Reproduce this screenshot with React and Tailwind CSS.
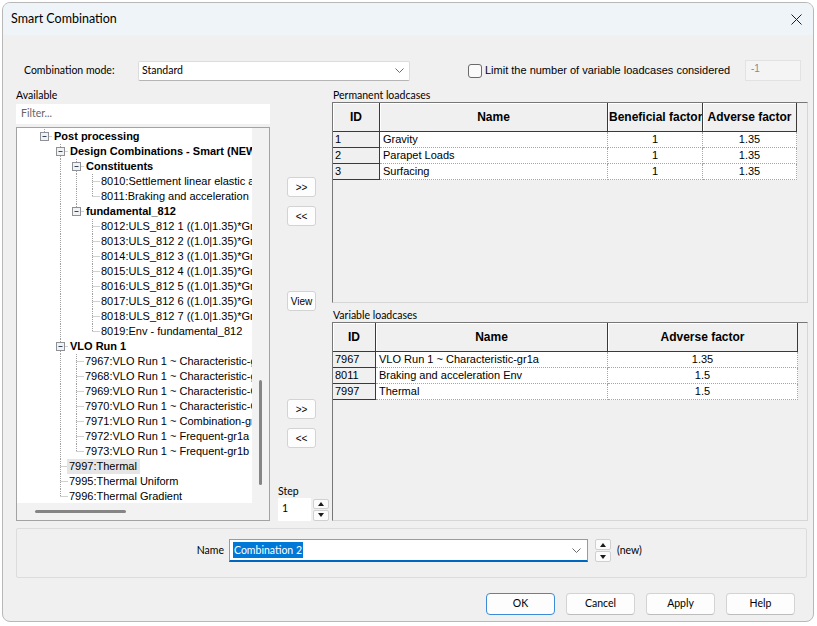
import React from 'react'

const ui = "font-['Lato','Noto_Sans',sans-serif]"
const tah = "font-['Liberation_Sans',Arial,sans-serif]"

const tree = [
  { l: 0, t: 'Post processing', b: true, exp: true, last: true, c: [] },
  { l: 1, t: 'Design Combinations - Smart (NEW)', b: true, exp: true, c: [] },
  { l: 2, t: 'Constituents', b: true, exp: true, c: [1] },
  { l: 3, t: '8010:Settlement linear elastic analysis', c: [1, 2] },
  { l: 3, t: '8011:Braking and acceleration Env', last: true, c: [1, 2] },
  { l: 2, t: 'fundamental_812', b: true, exp: true, last: true, c: [1] },
  { l: 3, t: '8012:ULS_812 1 ((1.0|1.35)*Gravity', c: [1] },
  { l: 3, t: '8013:ULS_812 2 ((1.0|1.35)*Gravity', c: [1] },
  { l: 3, t: '8014:ULS_812 3 ((1.0|1.35)*Gravity', c: [1] },
  { l: 3, t: '8015:ULS_812 4 ((1.0|1.35)*Gravity', c: [1] },
  { l: 3, t: '8016:ULS_812 5 ((1.0|1.35)*Gravity', c: [1] },
  { l: 3, t: '8017:ULS_812 6 ((1.0|1.35)*Gravity', c: [1] },
  { l: 3, t: '8018:ULS_812 7 ((1.0|1.35)*Gravity', c: [1] },
  { l: 3, t: '8019:Env - fundamental_812', last: true, c: [1] },
  { l: 1, t: 'VLO Run 1', b: true, exp: true, c: [] },
  { l: 2, t: '7967:VLO Run 1 ~ Characteristic-gr1a', c: [1] },
  { l: 2, t: '7968:VLO Run 1 ~ Characteristic-gr1b', c: [1] },
  { l: 2, t: '7969:VLO Run 1 ~ Characteristic-Gr2', c: [1] },
  { l: 2, t: '7970:VLO Run 1 ~ Characteristic-Gr3', c: [1] },
  { l: 2, t: '7971:VLO Run 1 ~ Combination-gr1a', c: [1] },
  { l: 2, t: '7972:VLO Run 1 ~ Frequent-gr1a', c: [1] },
  { l: 2, t: '7973:VLO Run 1 ~ Frequent-gr1b', last: true, c: [1] },
  { l: 1, t: '7997:Thermal', hl: true, c: [] },
  { l: 1, t: '7995:Thermal Uniform', c: [] },
  { l: 1, t: '7996:Thermal Gradient', last: true, c: [] },
]

const dot = { stroke: '#a0a0a0', strokeDasharray: '1 1' }

function Guide({ on }) {
  return (
    <svg width="16" height="15" className="shrink-0">
      {on && <line x1="8.5" y1="0" x2="8.5" y2="15" {...dot} />}
    </svg>
  )
}

function Node({ exp, last }) {
  return (
    <svg width="16" height="15" className="shrink-0">
      <line x1="8.5" y1="0" x2="8.5" y2={last ? 7.5 : 15} {...dot} />
      <line x1="8.5" y1="7.5" x2="16" y2="7.5" {...dot} />
      {exp && (
        <>
          <rect x="4.5" y="3.5" width="8" height="8" fill="#f1f2f4" stroke="#8f9194" />
          <line x1="6.5" y1="7.5" x2="10.5" y2="7.5" stroke="#33485e" />
        </>
      )}
    </svg>
  )
}

function TreeRow({ r }) {
  const guides = []
  for (let j = 0; j < r.l; j++) guides.push(<Guide key={j} on={r.c.includes(j)} />)
  return (
    <div className="flex h-[15px] items-center">
      <div className="w-[19px] shrink-0" />
      {guides}
      <Node exp={r.exp} last={r.last} />
      <span
        className={`whitespace-nowrap text-[11px] leading-[15px] ${r.b ? 'font-bold' : ''} ${
          r.exp ? 'ml-[2px]' : r.hl ? '-ml-[1px] pl-[2px] pr-[3px] bg-[#e5e5e5]' : 'ml-[1px]'
        }`}
      >
        {r.t}
      </span>
    </div>
  )
}

function SmallBtn({ children, className = '' }) {
  return (
    <div
      className={`ml-[17px] w-[29px] h-[20px] flex items-center justify-center rounded-[3px] border border-[#d3d3d3] bg-[#fdfdfd] ${tah} text-[10px] ${className}`}
    >
      {children}
    </div>
  )
}

function Tri({ up }) {
  return (
    <svg width="6" height="4">
      {up ? <polygon points="0,4 3,0 6,4" fill="#1a1a1a" /> : <polygon points="0,0 6,0 3,4" fill="#1a1a1a" />}
    </svg>
  )
}

function Spinner({ h }) {
  return (
    <div className={`flex flex-col gap-[1px] w-[16px] ${h}`}>
      <div className="flex-1 flex items-center justify-center border border-[#d0d0d0] bg-[#fbfbfb] rounded-[2px]">
        <Tri up />
      </div>
      <div className="flex-1 flex items-center justify-center border border-[#d0d0d0] bg-[#fbfbfb] rounded-[2px]">
        <Tri />
      </div>
    </div>
  )
}

function Chevron() {
  return (
    <svg width="9" height="5" className="shrink-0">
      <polyline points="0.5,0.5 4.5,4.5 8.5,0.5" fill="none" stroke="#6b6b6b" />
    </svg>
  )
}

function Grid({ h, cols, rows }) {
  return (
    <div
      className={`${h} border-t border-l border-[#777777] border-r border-b border-r-[#d6d6d6] border-b-[#d6d6d6] ${tah} text-black`}
    >
      <div className="flex h-[29px]">
        {cols.map((c) => (
          <div
            key={c.label}
            className={`${c.w} shrink-0 bg-[#f0f0f0] border-r border-b border-[#3a3a3a] shadow-[inset_1px_1px_0_#ffffff] overflow-hidden whitespace-nowrap text-center font-bold text-[12px] leading-[28px] px-[1px]`}
          >
            {c.label}
          </div>
        ))}
      </div>
      {rows.map((row) => (
        <div key={row[0]} className="flex h-[16px] text-[11px] leading-[15px]">
          {row.map((v, i) =>
            i === 0 ? (
              <div
                key={i}
                className={`${cols[0].w} shrink-0 bg-[#f0f0f0] border-r border-b border-[#3a3a3a] pl-[2px]`}
              >
                {v}
              </div>
            ) : (
              <div
                key={i}
                className={`${cols[i].w} shrink-0 bg-white border-r border-b border-dotted border-[#a6a6a6] overflow-hidden whitespace-nowrap ${
                  i === 1 ? 'pl-[3px]' : 'text-center'
                }`}
              >
                {v}
              </div>
            )
          )}
        </div>
      ))}
    </div>
  )
}

export default function App() {
  return (
    <div className="w-[817px] h-[626px] bg-white pt-[2px] pl-[2px] pr-[3px] pb-[4px]">
      <div className="flex flex-col w-full h-full rounded-[8px] border border-[#b8b8b8] bg-[#f0f0f0] overflow-hidden text-black">
        {/* title bar */}
        <div className="flex items-center justify-between h-[32px] bg-[#eff4f9] shrink-0">
          <span className={`${ui} text-[12.5px] pl-[8px]`}>Smart Combination</span>
          <svg width="11" height="11" className="mr-[11px]">
            <line x1="0.5" y1="0.5" x2="10.5" y2="10.5" stroke="#1f1f1f" />
            <line x1="10.5" y1="0.5" x2="0.5" y2="10.5" stroke="#1f1f1f" />
          </svg>
        </div>

        <div className="flex flex-col flex-1 pl-[13px] pr-[5px]">
          {/* combination mode row */}
          <div className="flex items-center h-[21px] mt-[25px]">
            <span className={`${ui} text-[10.5px] pl-[8px] w-[122px] shrink-0`}>Combination mode:</span>
            <div className="flex items-center justify-between w-[272px] h-[20px] bg-white border border-[#dcdcdc] border-b-[#b5b5b5] rounded-[2px] pl-[3px] pr-[5px]">
              <span className={`${ui} text-[10.5px]`}>Standard</span>
              <Chevron />
            </div>
            <div className="ml-[58px] w-[14px] h-[14px] rounded-[3px] border border-[#6a6a6a] bg-[#fafafa]" />
            <span className={`${tah} text-[11px] ml-[3px]`}>Limit the number of variable loadcases considered</span>
            <div className={`ml-auto mr-[7px] w-[56px] h-[21px] bg-[#f4f4f4] border border-[#e2e2e2] pl-[5px] pt-[1px] ${tah} text-[10px] leading-[14px] text-[#8a8a8a]`}>
              -1
            </div>
          </div>

          {/* main area */}
          <div className="flex h-[433px] mt-[7px]">
            {/* available */}
            <div className="flex flex-col w-[254px] shrink-0">
              <div className={`${ui} text-[10.5px] h-[15px] leading-[15px]`}>Available</div>
              <div className={`${ui} text-[10.5px] text-[#666666] mt-[1px] h-[21px] bg-white pl-[5px] leading-[19px]`}>
                Filter...
              </div>
              <div className="mt-[3px] h-[394px] border border-[#a3a3a3] flex flex-col">
                <div className="flex flex-1 min-h-0">
                  <div className={`w-[235px] bg-white overflow-hidden pt-[1px] ${tah}`}>
                    {tree.map((r, i) => (
                      <TreeRow key={i} r={r} />
                    ))}
                  </div>
                  <div className="flex-1 bg-[#f2f2f2] flex flex-col items-start pl-[7px]">
                    <div className="h-[252px] shrink-0" />
                    <div className="w-[3px] h-[105px] rounded-full bg-[#858585]" />
                  </div>
                </div>
                <div className="flex items-center h-[17px] bg-[#f2f2f2]">
                  <div className="ml-[18px] w-[91px] h-[3px] rounded-full bg-[#858585]" />
                </div>
              </div>
            </div>

            {/* middle buttons */}
            <div className="flex flex-col w-[62px] shrink-0">
              <SmallBtn className="mt-[89px]">&gt;&gt;</SmallBtn>
              <SmallBtn className="mt-[9px]">&lt;&lt;</SmallBtn>
              <SmallBtn className="mt-[65px]">View</SmallBtn>
              <SmallBtn className="mt-[88px]">&gt;&gt;</SmallBtn>
              <SmallBtn className="mt-[9px]">&lt;&lt;</SmallBtn>
              <div className={`${ui} text-[10.5px] mt-auto ml-[8px] h-[13px] leading-[13px]`}>Step</div>
              <div className="flex items-center ml-[8px] h-[23px]">
                <div className={`${ui} text-[10.5px] w-[33px] h-[23px] bg-white pl-[4px] leading-[21px]`}>1</div>
                <div className="ml-[2px]">
                  <Spinner h="h-[22px]" />
                </div>
              </div>
            </div>

            {/* loadcase grids */}
            <div className="flex flex-col w-[476px] shrink-0">
              <div className={`${ui} text-[10.5px] h-[14px] leading-[14px] pl-[1px]`}>Permanent loadcases</div>
              <Grid
                h="h-[201px]"
                cols={[
                  { w: 'w-[47px]', label: 'ID' },
                  { w: 'w-[228px]', label: 'Name' },
                  { w: 'w-[95px]', label: 'Beneficial factor' },
                  { w: 'w-[94px]', label: 'Adverse factor' },
                ]}
                rows={[
                  ['1', 'Gravity', '1', '1.35'],
                  ['2', 'Parapet Loads', '1', '1.35'],
                  ['3', 'Surfacing', '1', '1.35'],
                ]}
              />
              <div className={`${ui} text-[10.5px] h-[19px] pt-[5px] leading-[14px] pl-[1px]`}>Variable loadcases</div>
              <Grid
                h="h-[199px]"
                cols={[
                  { w: 'w-[43px]', label: 'ID' },
                  { w: 'w-[232px]', label: 'Name' },
                  { w: 'w-[190px]', label: 'Adverse factor' },
                ]}
                rows={[
                  ['7967', 'VLO Run 1 ~ Characteristic-gr1a', '1.35'],
                  ['8011', 'Braking and acceleration Env', '1.5'],
                  ['7997', 'Thermal', '1.5'],
                ]}
              />
            </div>
          </div>

          {/* name group */}
          <div className="mt-[7px] w-[791px] h-[50px] border border-[#dcdcdc] rounded-[2px] pt-[10px]">
            <div className="flex items-center h-[23px]">
              <span className={`${ui} text-[10.5px] w-[207px] text-right`}>Name</span>
              <div className="ml-[5px] w-[359px] h-[23px] flex items-center justify-between bg-white border border-[#6aa5e3] border-b-2 border-b-[#0067c0] pl-[3px] pr-[6px]">
                <span className={`${ui} text-[10.5px] text-white bg-[#0078d7] px-[1px] leading-[16px]`}>Combination 2</span>
                <Chevron />
              </div>
              <div className="ml-[7px]">
                <Spinner h="h-[23px]" />
              </div>
              <span className={`${ui} text-[10.5px] ml-[6px]`}>(new)</span>
            </div>
          </div>

          {/* dialog buttons */}
          <div className="flex justify-end gap-[11px] mt-[15px] mr-[13px]">
            {['OK', 'Cancel', 'Apply', 'Help'].map((b) => (
              <div
                key={b}
                className={`w-[69px] h-[22px] flex items-center justify-center rounded-[4px] bg-[#fdfdfd] ${ui} text-[10.5px] border ${
                  b === 'OK' ? 'border-[#3d8ad6]' : 'border-[#d3d3d3] border-b-[#bdbdbd]'
                }`}
              >
                {b}
              </div>
            ))}
          </div>
        </div>
      </div>
    </div>
  )
}
